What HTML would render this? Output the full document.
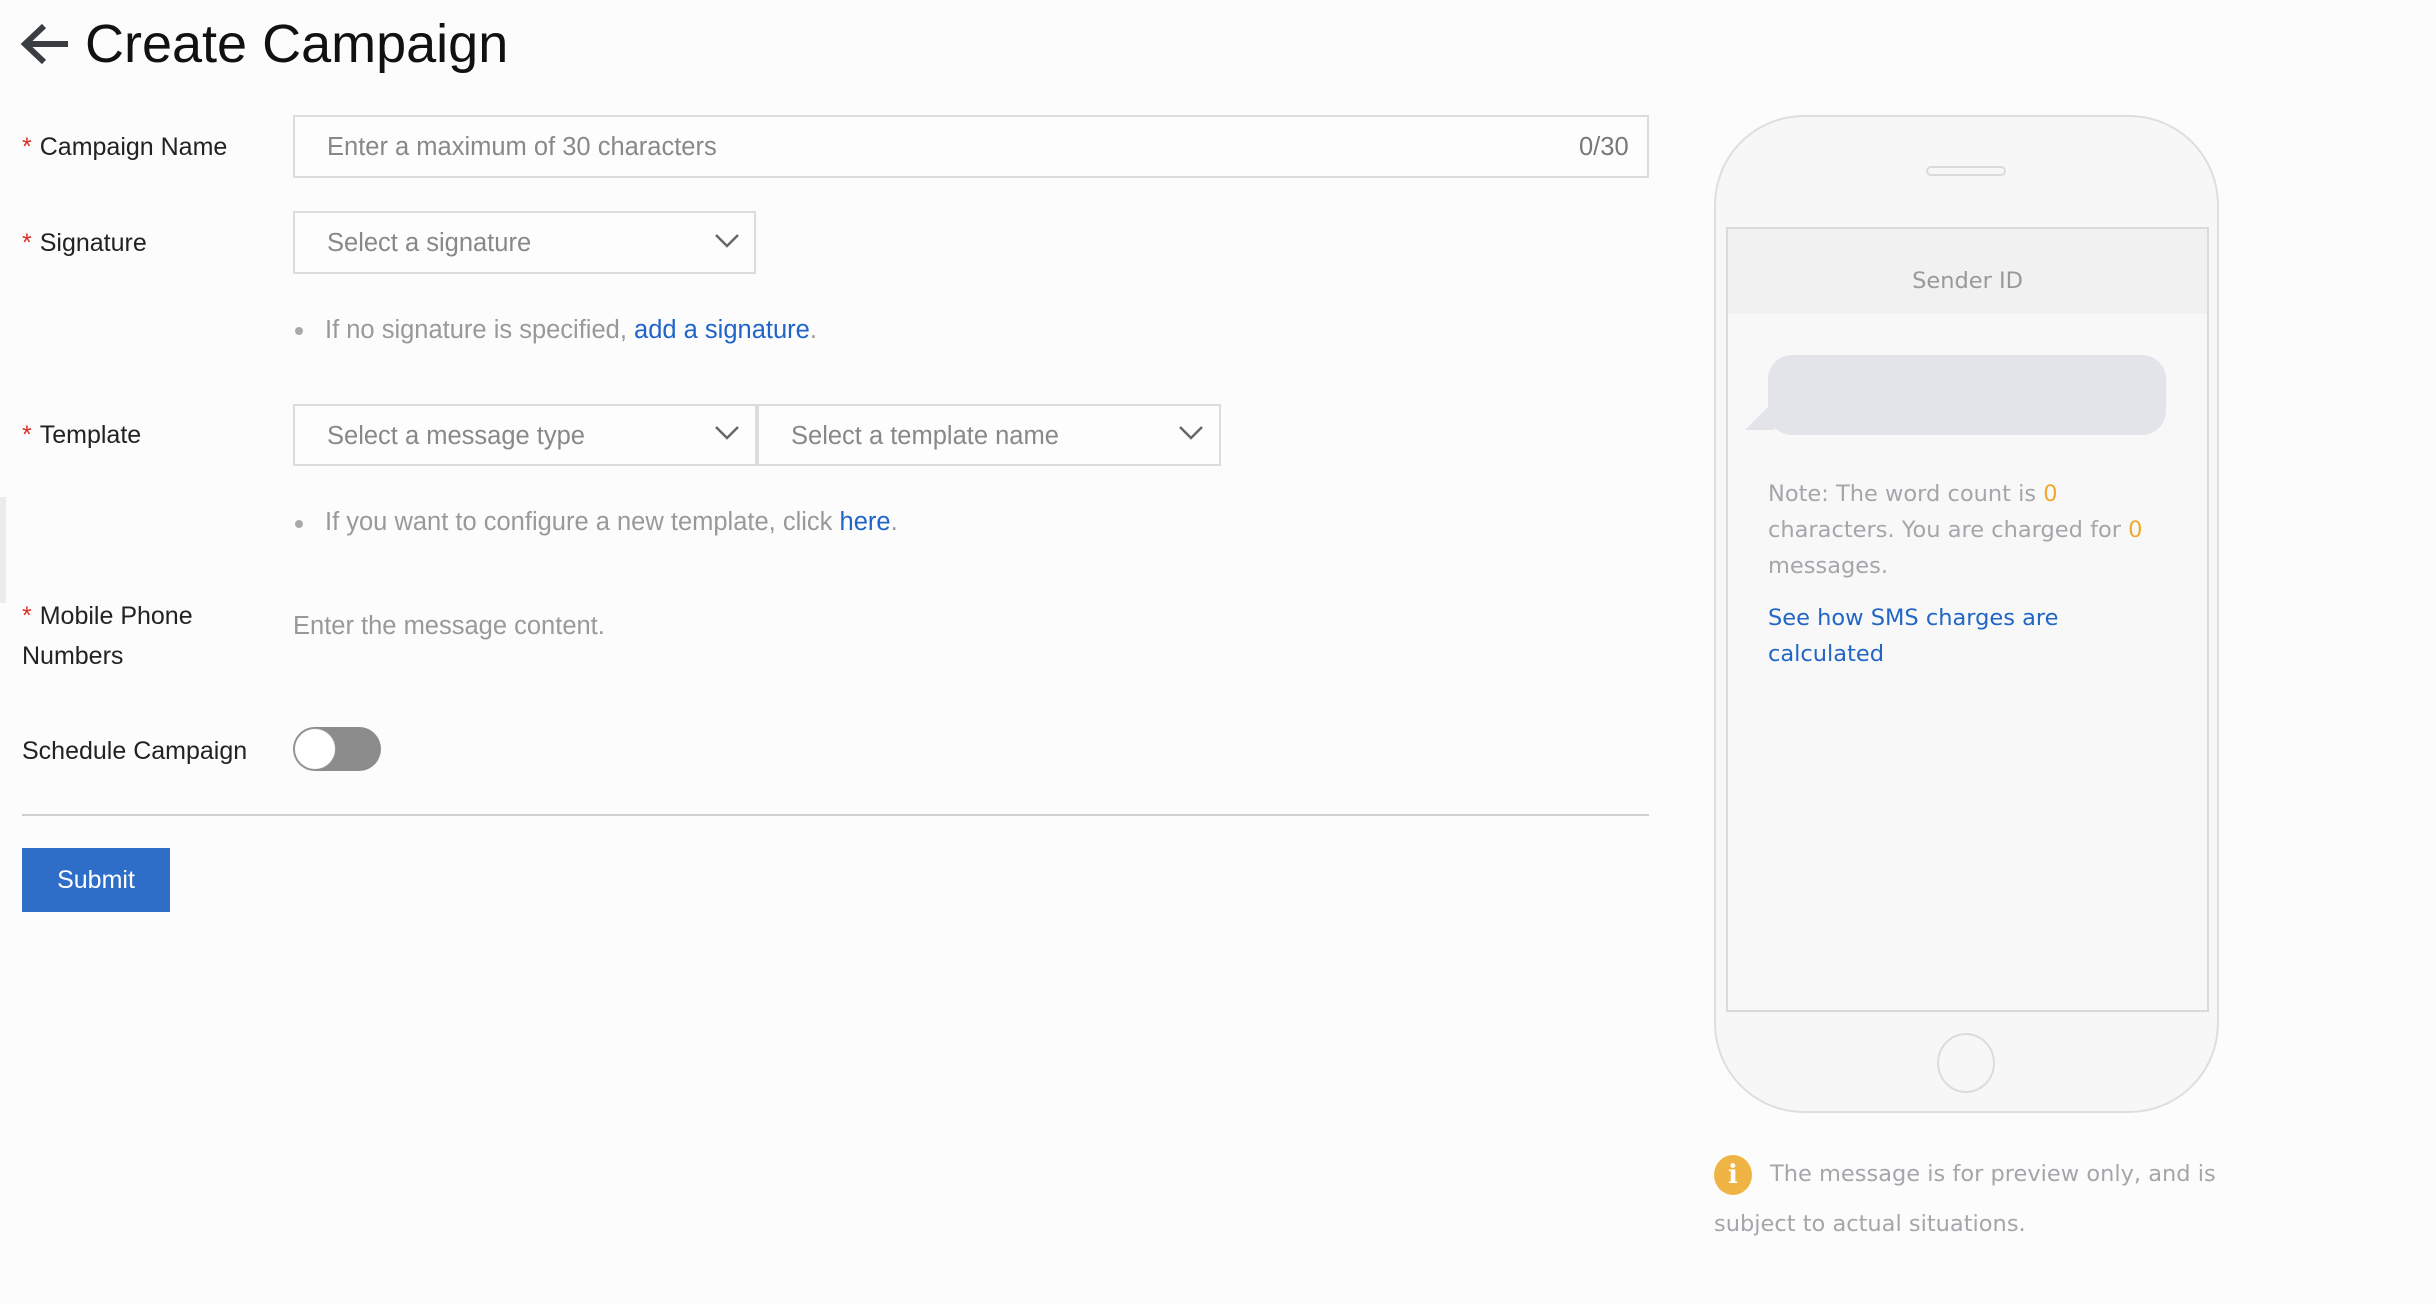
<!DOCTYPE html>
<html><head><meta charset="utf-8"><style>
*{margin:0;padding:0;box-sizing:border-box}
body{width:2436px;height:1304px;background:#fcfcfc;position:relative;overflow:hidden;font-family:"Liberation Sans",Arial,sans-serif;color:#222}
.a{position:absolute;white-space:nowrap}
.lbl{font-size:25px;color:#222;line-height:30px}
.req{color:#d93026;margin-right:8px}
.box{position:absolute;border:2px solid #dcdcdc;background:#fdfdfd}
.ph{font-size:25.5px;color:#888}
.hint{font-size:25.5px;color:#999}
.hint a{color:#1f64c8;text-decoration:none}
.r{font-family:"DejaVu Sans",sans-serif;font-size:22.5px}
</style></head><body>
<svg class="a" style="left:20px;top:22px" width="52" height="44" viewBox="0 0 52 44"><path d="M48 22H6M24 4L5 22l19 18" fill="none" stroke="#3a3d42" stroke-width="6"/></svg>
<div class="a" style="left:85px;top:9px;font-size:54px;color:#111;line-height:70px">Create Campaign</div>
<div class="a" style="left:0;top:497px;width:6px;height:106px;background:#ececec"></div>

<div class="a lbl" style="left:22px;top:132px"><span class="req">*</span>Campaign Name</div>
<div class="box" style="left:293px;top:115px;width:1356px;height:63px"></div>
<div class="a ph" style="left:327px;top:133px">Enter a maximum of 30 characters</div>
<div class="a ph" style="left:1579px;top:133px;color:#777">0/30</div>

<div class="a lbl" style="left:22px;top:228px"><span class="req">*</span>Signature</div>
<div class="box" style="left:293px;top:211px;width:463px;height:63px"></div>
<div class="a ph" style="left:327px;top:229px">Select a signature</div>
<svg class="a" style="left:714px;top:233px" width="26" height="16"><path d="M2 2l11 11L24 2" fill="none" stroke="#666" stroke-width="2.5"/></svg>
<div class="a" style="left:295px;top:327px;width:8px;height:8px;border-radius:50%;background:#aaa"></div>
<div class="a hint" style="left:325px;top:316px">If no signature is specified, <a>add a signature</a>.</div>

<div class="a lbl" style="left:22px;top:420px"><span class="req">*</span>Template</div>
<div class="box" style="left:293px;top:404px;width:464px;height:62px"></div>
<div class="a ph" style="left:327px;top:422px">Select a message type</div>
<svg class="a" style="left:714px;top:425px" width="26" height="16"><path d="M2 2l11 11L24 2" fill="none" stroke="#666" stroke-width="2.5"/></svg>
<div class="box" style="left:757px;top:404px;width:464px;height:62px"></div>
<div class="a ph" style="left:791px;top:422px">Select a template name</div>
<svg class="a" style="left:1178px;top:425px" width="26" height="16"><path d="M2 2l11 11L24 2" fill="none" stroke="#666" stroke-width="2.5"/></svg>
<div class="a" style="left:295px;top:520px;width:8px;height:8px;border-radius:50%;background:#aaa"></div>
<div class="a hint" style="left:325px;top:508px">If you want to configure a new template, click <a>here</a>.</div>

<div class="a lbl" style="left:22px;top:596px;line-height:40px;white-space:normal;width:220px"><span class="req">*</span>Mobile Phone Numbers</div>
<div class="a ph" style="left:293px;top:612px;color:#999">Enter the message content.</div>

<div class="a lbl" style="left:22px;top:736px">Schedule Campaign</div>
<div class="a" style="left:293px;top:727px;width:88px;height:44px;border-radius:22px;background:#8c8c8c"></div>
<div class="a" style="left:294px;top:728px;width:42px;height:42px;border-radius:50%;background:#fff;border:1px solid #999"></div>

<div class="a" style="left:22px;top:814px;width:1627px;height:2px;background:#d0d0d0"></div>
<div class="a" style="left:22px;top:848px;width:148px;height:64px;background:#2f6ec8;color:#fff;font-size:25px;line-height:64px;text-align:center">Submit</div>

<div class="a" style="left:1714px;top:115px;width:505px;height:998px;border:2px solid #dedede;border-radius:90px;background:#f7f7f7"></div>
<div class="a" style="left:1926px;top:166px;width:80px;height:10px;border:2px solid #dadada;border-radius:6px"></div>
<div class="a" style="left:1726px;top:227px;width:483px;height:785px;border:2px solid #dadada;background:#f8f8f8"></div>
<div class="a r" style="left:1728px;top:229px;width:479px;height:85px;background:#f1f1f1;color:#999;text-align:center;line-height:104px">Sender ID</div>
<div class="a" style="left:1768px;top:355px;width:398px;height:80px;border-radius:24px;background:#e3e4e9"></div>
<svg class="a" style="left:1745px;top:405px" width="30" height="30"><path d="M25 0L0 25h30z" fill="#e3e4e9"/></svg>
<div class="a r" style="left:1768px;top:476px;color:#a4a6aa;line-height:36px">Note: The word count is <span style="color:#f0a92a">0</span><br>characters. You are charged for <span style="color:#f0a92a">0</span><br>messages.</div>
<div class="a r" style="left:1768px;top:600px;color:#2266c4;line-height:36px">See how SMS charges are<br>calculated</div>
<div class="a" style="left:1937px;top:1033px;width:58px;height:60px;border:2px solid #dcdcdc;border-radius:50%"></div>

<div class="a" style="left:1714px;top:1155px;width:38px;height:40px;border-radius:50%;background:#efb443;color:#fff;font:bold 26px 'DejaVu Serif',serif;text-align:center;line-height:40px">i</div>
<div class="a r" style="left:1770px;top:1161px;color:#a4a6aa">The message is for preview only, and is</div>
<div class="a r" style="left:1714px;top:1211px;color:#a4a6aa">subject to actual situations.</div>
</body></html>
